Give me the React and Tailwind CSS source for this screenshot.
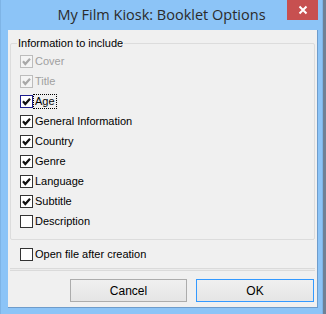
import React from 'react';

const items = [
    { label: 'Cover', checked: true, disabled: true },
    { label: 'Title', checked: true, disabled: true },
    { label: 'Age', checked: true, focused: true },
    { label: 'General Information', checked: true },
    { label: 'Country', checked: true },
    { label: 'Genre', checked: true },
    { label: 'Language', checked: true },
    { label: 'Subtitle', checked: true },
    { label: 'Description', checked: false },
];

function Box({ checked, disabled, focused }) {
    const border = disabled ? 'border-[#bcbcbc] bg-[#f4f4f4]' : focused ? 'border-[#1c1c8c] bg-white' : 'border-[#333333] bg-white';
    return (
        <span className={`w-[13px] h-[13px] border ${border} flex items-center justify-center shrink-0`}>
            {checked && (
                <svg width="11" height="11" viewBox="0 0 11 11">
                    <path d="M2 5.3 L4.3 8 L9 2.8" fill="none" stroke={disabled ? '#a8a8a8' : '#111'} strokeWidth="2.2" />
                </svg>
            )}
        </span>
    );
}

function Row({ label, checked, disabled, focused }) {
    return (
        <div className="h-[20px] flex items-center pl-[9px]">
            <Box checked={checked} disabled={disabled} focused={focused} />
            <span
                className={`ml-[1px] px-[1px] leading-[13px] ${disabled ? 'text-[#a0a0a0]' : 'text-black'} ${focused ? 'outline outline-1 outline-dotted outline-black' : ''}`}
            >
                {label}
            </span>
        </div>
    );
}

export default function App() {
    return (
        <div className="w-[326px] h-[314px] flex overflow-hidden bg-[#6f8196]" style={{ fontFamily: '"Liberation Sans", Arial, sans-serif' }}>
            <div className="w-[323px] h-[314px] bg-[#8cc4f7] border-l border-r border-[#7eb4e6] flex flex-col shrink-0">
                <div className="h-[30px] grid grid-cols-[1fr_auto_1fr] items-start">
                    <div />
                    <div className="pt-[5px] text-[14.5px] leading-[20px] text-[#2b2b2b] whitespace-nowrap" style={{ fontFamily: '"Open Sans", sans-serif' }}>
                        My Film Kiosk: Booklet Options
                    </div>
                    <div className="flex justify-end pr-[4px]">
                        <button className="w-[31px] h-[20px] bg-[#c75050] flex items-center justify-center">
                            <svg width="10" height="10" viewBox="0 0 10 10">
                                <path d="M1.5 1.5 L8.5 8.5 M8.5 1.5 L1.5 8.5" stroke="#fff" strokeWidth="2" />
                            </svg>
                        </button>
                    </div>
                </div>

                <div className="ml-[7px] w-[310px] h-[278px] bg-[#f0f0f0] border-r border-b border-[#6e9ccb] flex flex-col text-[11px]">
                    <fieldset className="mt-[6px] mx-[2px] border border-[#dcdcdc] rounded-[2px] pt-[1px] pb-[8px]">
                        <legend className="ml-[6px] px-[1px] leading-[14px] text-black">Information to include</legend>
                        {items.map((it) => (
                            <Row key={it.label} {...it} />
                        ))}
                    </fieldset>

                    <div className="mt-[4px] h-[20px] flex items-center pl-[12px]">
                        <Box checked={false} />
                        <span className="ml-[1px] px-[1px] text-black">Open file after creation</span>
                    </div>

                    <div className="mt-[4px] mx-[2px] h-[3px] border-y border-[#dadada] bg-[#ececec]" />

                    <div className="mt-[8px] flex justify-end gap-[9px] pr-[3px]">
                        <button className="w-[117px] h-[23px] border border-[#acacac] bg-gradient-to-b from-[#f0f0f0] to-[#e5e5e5] text-[12px] text-black">
                            Cancel
                        </button>
                        <button className="w-[118px] h-[23px] border border-[#3399ff] bg-gradient-to-b from-[#f0f0f0] to-[#e5e5e5] text-[12px] text-black">
                            OK
                        </button>
                    </div>
                </div>
            </div>
        </div>
    );
}
